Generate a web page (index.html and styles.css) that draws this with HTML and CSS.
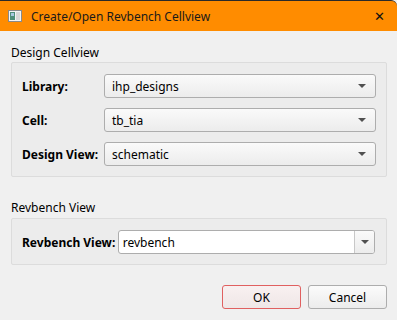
FILE: index.html
```html
<!DOCTYPE html>
<html lang="en">
<head>
    <meta charset="UTF-8">
    <title>Create/Open Revbench Cellview</title>
    <link rel="stylesheet" href="styles.css">
</head>
<body>
    <div class="window">
        <div class="titlebar">
            <svg class="app-icon" width="14" height="12" viewBox="0 0 14 12">
                <rect x="0.5" y="0.5" width="13" height="11" fill="#f4f4f4" stroke="#8a8a8a"/>
                <rect x="2" y="2" width="5" height="8" fill="#4f8f7a"/>
                <rect x="3" y="3" width="3" height="3" fill="#a8c8e0"/>
                <rect x="8" y="2" width="4" height="8" fill="#d8d8d8"/>
            </svg>
            <span class="title">Create/Open Revbench Cellview</span>
            <span class="close">&#x2715;</span>
        </div>

        <div class="content">
            <div class="section-label">Design Cellview</div>
            <div class="group">
                <div class="form-grid">
                    <label>Library:</label>
                    <div class="combo"><span>ihp_designs</span><i class="arrow"></i></div>
                    <label>Cell:</label>
                    <div class="combo"><span>tb_tia</span><i class="arrow"></i></div>
                    <label>Design View:</label>
                    <div class="combo"><span>schematic</span><i class="arrow"></i></div>
                </div>
            </div>

            <div class="section-label second">Revbench View</div>
            <div class="group">
                <div class="form-row">
                    <label>Revbench View:</label>
                    <div class="combo editable">
                        <span>revbench</span>
                        <div class="drop-btn"><i class="arrow"></i></div>
                    </div>
                </div>
            </div>

            <div class="buttons">
                <button class="btn default">OK</button>
                <button class="btn">Cancel</button>
            </div>
        </div>
    </div>
</body>
</html>
```

FILE: styles.css
```css
* {
    margin: 0;
    padding: 0;
    box-sizing: border-box;
}

body {
    background: #f0f0f0;
    font-family: "Noto Sans", "Open Sans", sans-serif;
    font-size: 12px;
    color: #000;
}

.window {
    width: 397px;
    height: 320px;
    background: #f0f0f0;
}

/* Title bar */
.titlebar {
    height: 31px;
    background: #ff8c00;
    display: flex;
    align-items: center;
    padding-left: 8px;
    border-top: 1px solid #2a2a2a;
    border-top-right-radius: 6px;
}

.app-icon {
    margin-right: 9px;
}

.title {
    flex: 1;
    font-size: 12px;
    color: #1a1a1a;
}

.close {
    width: 24px;
    margin-right: 6px;
    text-align: center;
    font-size: 13px;
    color: #111;
}

/* Content */
.content {
    padding: 14px 10px 0 11px;
}

.section-label {
    height: 17px;
    line-height: 16px;
}

.section-label.second {
    margin-top: 23px;
    height: 18px;
}

.group {
    width: 376px;
    border: 1px solid #dcdcdc;
    border-radius: 2px;
    background: #ececec;
    padding: 11px 11px 10px 10px;
}

.form-grid {
    display: grid;
    grid-template-columns: 82px 272px;
    row-gap: 10px;
    align-items: center;
}

.form-row {
    display: flex;
    align-items: center;
}

.form-row label {
    width: 96px;
}

label {
    font-weight: bold;
}

.combo {
    height: 24px;
    border: 1px solid #adadad;
    border-radius: 3px;
    background: linear-gradient(#fafafa, #ececec);
    display: flex;
    align-items: center;
    padding-left: 7px;
}

.combo span {
    flex: 1;
}

.arrow {
    display: block;
    width: 0;
    height: 0;
    margin-right: 9px;
    border-left: 4px solid transparent;
    border-right: 4px solid transparent;
    border-top: 4px solid #505050;
}

.combo.editable {
    width: 258px;
    background: #fff;
    padding-left: 4px;
}

.drop-btn {
    width: 20px;
    height: 100%;
    border-left: 1px solid #c8c8c8;
    background: linear-gradient(#fafafa, #ececec);
    border-radius: 0 2px 2px 0;
    display: flex;
    align-items: center;
    justify-content: center;
}

.drop-btn .arrow {
    margin-right: 0;
}

/* Buttons */
.buttons {
    display: flex;
    justify-content: flex-end;
    gap: 7px;
    margin-top: 20px;
}

.btn {
    width: 79px;
    height: 24px;
    border: 1px solid #adadad;
    border-radius: 3px;
    background: linear-gradient(#fbfbfb, #ececec);
    font-family: inherit;
    font-size: 12px;
    color: #000;
}

.btn.default {
    border-color: #e06060;
    background: linear-gradient(#f8f0f0, #efe7e7);
}
```
